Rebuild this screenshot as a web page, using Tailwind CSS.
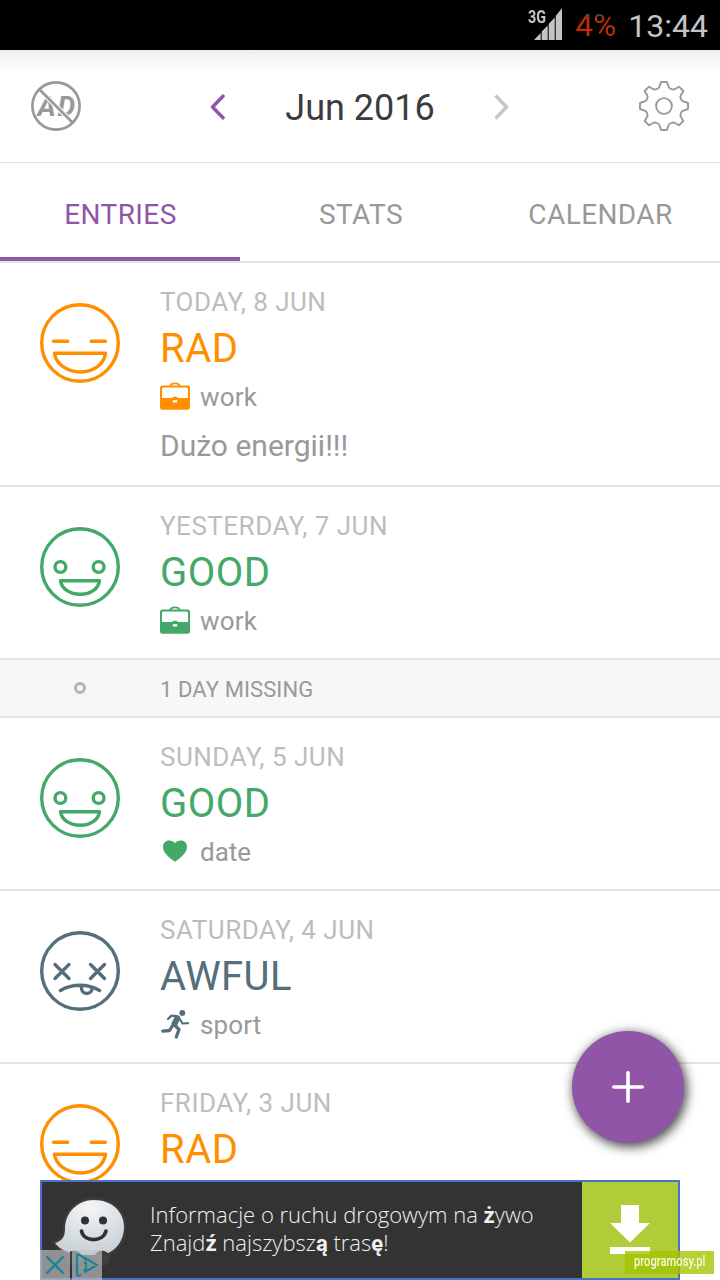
<!DOCTYPE html>
<html lang="en">
<head>
  <meta charset="UTF-8" />
  <meta name="viewport" content="width=device-width, initial-scale=1.0"/>
  <title>Jun 2016 - Entries</title>
  <script src="https://cdn.jsdelivr.net/npm/@tailwindcss/browser@4"></script>
</head>
<body class="bg-white font-['Roboto',sans-serif]">
  <!-- Shared icons -->
  <svg class="hidden">
    <symbol id="face-rad" viewBox="0 0 80 80">
      <g fill="none" stroke="currentColor" stroke-width="3.4" stroke-linecap="round" stroke-linejoin="round">
        <circle cx="40" cy="40" r="38.3"/>
        <path d="M13.5 38.3H27.8M51.2 38.3H65.5M14.5 50.3H65.5C64 61 54 69 40.5 69S16 61 14.5 50.3Z"/>
      </g>
    </symbol>
    <symbol id="face-good" viewBox="0 0 80 80">
      <g fill="none" stroke="currentColor" stroke-width="3.4" stroke-linejoin="round">
        <circle cx="40" cy="40" r="38.3"/>
        <circle cx="20.4" cy="40" r="5.4"/>
        <circle cx="58.6" cy="40" r="5.4"/>
        <path d="M20.5 53.7H59.5C58.5 61.5 51 67.3 40.3 67.3S21.5 61.5 20.5 53.7Z"/>
      </g>
    </symbol>
    <symbol id="face-awful" viewBox="0 0 80 80">
      <g fill="none" stroke="currentColor" stroke-width="3.4" stroke-linecap="round">
        <circle cx="40" cy="40" r="38.3"/>
        <path d="M15 33.5L29 47.5M29 33.5L15 47.5M50.5 33.5L64.5 47.5M64.5 33.5L50.5 47.5M20.5 59.5C32 52.5 48 52.5 59.5 59.5M41.5 56C41 60 43.5 62.5 46.8 62.5S52 60 52 57.5"/>
      </g>
    </symbol>
    <symbol id="icon-work" viewBox="0 0 30 30">
      <path fill="none" stroke="currentColor" stroke-width="1.8" d="M10 4.5C10.5 2 12.5 1.3 15 1.3S19.5 2 20 4.5"/>
      <path fill="currentColor" fill-rule="evenodd" d="M2.5 3.5H27.5A2.5 2.5 0 0 1 30 6V25.2A2.5 2.5 0 0 1 27.5 27.7H2.5A2.5 2.5 0 0 1 0 25.2V6A2.5 2.5 0 0 1 2.5 3.5ZM3.5 5.5A1.5 1.5 0 0 0 2 7V16H12.5V15.7Q12.5 14.8 13.5 14.8H16.5Q17.5 14.8 17.5 15.7V16H28V7A1.5 1.5 0 0 0 26.5 5.5ZM12.7 18.2V19.5Q12.7 20.5 13.7 20.5H16.3Q17.3 20.5 17.3 19.5V18.2Z"/>
    </symbol>
    <symbol id="icon-date" viewBox="0 0 30 30">
      <path fill="currentColor" d="M15 24.8C11 22 3 16.5 3 10C3 6 5.8 3.5 9 3.5C11.5 3.5 13.8 4.5 15 6.3C16.2 4.5 18.5 3.5 21 3.5C24.2 3.5 27 6 27 10C27 16.5 19 22 15 24.8Z"/>
    </symbol>
    <symbol id="icon-sport" viewBox="0 0 30 30">
      <circle cx="22.3" cy="2.9" r="2.9" fill="currentColor"/>
      <g fill="none" stroke="currentColor" stroke-linejoin="round" stroke-linecap="round">
        <path stroke-width="2.2" d="M8 9L11.5 5.6L16.5 6M20 9.5L22.5 13.5L28 13.2"/>
        <path stroke-width="6" d="M17.2 8.3L14.6 13.6"/>
        <path stroke-width="3.3" d="M14.5 15L19 19.5L16.3 27M12.3 16L9.5 20.5L2.8 21.2"/>
      </g>
    </symbol>
  </svg>

  <div class="relative w-[720px] h-[1280px] overflow-hidden">
    <!-- Status bar -->
    <div class="h-[50px] bg-black flex items-center justify-end pr-3">
      <span class="text-[18px] leading-4 font-bold text-[#c4c4c4] -mt-[17px] inline-block w-[19px] origin-left scale-x-[0.8]">3G</span>
      <svg class="w-7 h-8 -ml-[13px] mr-[14px] -mt-0.5" viewBox="0 0 28 32" fill="#c4c4c4">
        <path d="M0 32L6.7 25V32ZM7.7 32V23.5L13.7 17.5V32ZM14.7 32V16L20.7 9.5V32ZM21.7 32V8L28 0V32Z"/>
      </svg>
      <span class="text-[31.5px] leading-[50px] mt-0.5 text-transparent bg-clip-text bg-linear-to-b from-[#4a4a4a] from-32% to-[#c42c02] to-32% mr-3">4%</span>
      <span class="text-[32px] leading-[50px] mt-0.5 text-[#c4c4c4]">13:44</span>
    </div>

    <!-- Header -->
    <div class="h-[113px] border-b border-[#e0e0e0] bg-linear-to-b from-[#efefef] to-white to-[24px] flex items-center justify-between px-[31px]">
      <svg class="w-[50px] h-[50px]" viewBox="0 0 50 50">
        <g font-size="28" font-weight="700" font-style="italic" fill="#999">
          <text x="6.5" y="35">A</text>
          <text x="26.5" y="34.5">D</text>
        </g>
        <path d="M9 9L41 41" stroke="#fff" stroke-width="5"/>
        <g fill="none" stroke="#999" stroke-width="2.7">
          <circle cx="25" cy="25" r="23.6"/>
          <path d="M8.3 8.3L41.7 41.7"/>
        </g>
      </svg>
      <div class="flex items-center">
        <svg class="w-4 h-[26px] mt-px" viewBox="0 0 16 26" fill="none" stroke="#9055a6" stroke-width="3.5" stroke-linecap="round" stroke-linejoin="round"><path d="M13 2.2L2.5 13L13 23.8"/></svg>
        <h1 class="w-[268px] mt-[3px] text-center text-[36px] leading-[50px] text-[#3c3c3c]">Jun 2016</h1>
        <svg class="w-4 h-[26px] mt-px" viewBox="0 0 16 26" fill="none" stroke="#c6c6c6" stroke-width="3.5"><path d="M1.5 1.5L12.5 13L1.5 24.5"/></svg>
      </div>
      <svg class="w-[50px] h-[50px]" viewBox="-25 -25 50 50" fill="none" stroke="#999" stroke-width="1.9" stroke-linejoin="round">
        <path id="cog" d="M-3-24H3L4.8-18.8Q5.5-17.3 7.5-16.8Q9.5-16 11-17L15-19.3L19.3-15L17-11Q16-9.5 16.8-7.5Q17.3-5.5 18.8-4.8L24-3V0"/>
        <use href="#cog" transform="rotate(90)"/>
        <use href="#cog" transform="rotate(180)"/>
        <use href="#cog" transform="rotate(270)"/>
        <circle r="7.9"/>
      </svg>
    </div>

    <!-- Tabs -->
    <div class="h-[100px] border-b-2 border-[#e4e4e4] grid grid-cols-3 text-center text-[28px] tracking-[0.4px] leading-[104px] text-[#999]">
      <div class="h-[98px] border-b-4 border-[#9055a6] text-[#9055a6] pl-px">ENTRIES</div>
      <div class="pl-0.5">STATS</div>
      <div class="pl-px">CALENDAR</div>
    </div>

    <!-- Entries -->
    <div class="flex border-b-2 border-[#e4e4e4] pt-[23px] pb-[18px] pl-10 text-[#ff8f00]">
      <svg class="w-20 h-20 mt-[17px] mr-10"><use href="#face-rad"/></svg>
      <div>
        <p class="text-[26px] leading-8 tracking-[0.45px] text-[#bdbdbd]">TODAY, 8 JUN</p>
        <p class="h-[60px] text-[40px] leading-[62px] tracking-[0.5px]">RAD</p>
        <div class="flex items-center gap-2.5 h-[38px]">
          <svg class="w-[30px] h-[30px]"><use href="#icon-work"/></svg>
          <span class="text-[26px] tracking-[0.2px] text-[#999]">work</span>
        </div>
        <p class="h-[51px] text-[30px] leading-[60px] text-[#999]">Dużo energii!!!</p>
      </div>
    </div>

    <div class="flex border-b-2 border-[#e4e4e4] pt-[23px] pb-[18px] pl-10 text-[#43a868]">
      <svg class="w-20 h-20 mt-[17px] mr-10"><use href="#face-good"/></svg>
      <div>
        <p class="text-[26px] leading-8 tracking-[0.5px] text-[#bdbdbd]">YESTERDAY, 7 JUN</p>
        <p class="h-[60px] text-[40px] leading-[62px] tracking-[0.5px]">GOOD</p>
        <div class="flex items-center gap-2.5 h-[38px]">
          <svg class="w-[30px] h-[30px]"><use href="#icon-work"/></svg>
          <span class="text-[26px] tracking-[0.2px] text-[#999]">work</span>
        </div>
      </div>
    </div>

    <div class="h-[58px] flex items-center border-b-2 border-[#e4e4e4] bg-[#f7f7f7] pl-[74px]">
      <div class="w-3 h-3 rounded-full border-3 border-[#b5b5b5]"></div>
      <span class="ml-[74px] mt-0.5 text-[22px] tracking-[0.1px] text-[#999]">1 DAY MISSING</span>
    </div>

    <div class="flex border-b-2 border-[#e4e4e4] pt-[23px] pb-[18px] pl-10 text-[#43a868]">
      <svg class="w-20 h-20 mt-[17px] mr-10"><use href="#face-good"/></svg>
      <div>
        <p class="text-[26px] leading-8 tracking-[0.5px] text-[#bdbdbd]">SUNDAY, 5 JUN</p>
        <p class="h-[60px] text-[40px] leading-[62px] tracking-[0.5px]">GOOD</p>
        <div class="flex items-center gap-2.5 h-[38px]">
          <svg class="w-[30px] h-[30px]"><use href="#icon-date"/></svg>
          <span class="text-[26px] text-[#999]">date</span>
        </div>
      </div>
    </div>

    <div class="flex border-b-2 border-[#e4e4e4] pt-[23px] pb-[18px] pl-10 text-[#546e7b]">
      <svg class="w-20 h-20 mt-[17px] mr-10"><use href="#face-awful"/></svg>
      <div>
        <p class="text-[26px] leading-8 tracking-[0.5px] text-[#bdbdbd]">SATURDAY, 4 JUN</p>
        <p class="h-[60px] text-[40px] leading-[62px] tracking-[0.4px]">AWFUL</p>
        <div class="flex items-center gap-2.5 h-[38px]">
          <svg class="w-[30px] h-[30px]"><use href="#icon-sport"/></svg>
          <span class="text-[26px] tracking-[0.1px] text-[#999]">sport</span>
        </div>
      </div>
    </div>

    <div class="flex pt-[23px] pl-10 text-[#ff8f00]">
      <svg class="w-20 h-20 mt-[17px] mr-10"><use href="#face-rad"/></svg>
      <div>
        <p class="text-[26px] leading-8 tracking-[0.5px] text-[#bdbdbd]">FRIDAY, 3 JUN</p>
        <p class="h-[60px] text-[40px] leading-[62px] tracking-[0.5px]">RAD</p>
      </div>
    </div>

    <!-- Add button -->
    <button class="absolute right-9 bottom-[137px] w-28 h-28 rounded-full bg-[#9055a6] shadow-[2px_3px_11px_1px_rgba(0,0,0,0.7)] flex items-center justify-center">
      <svg class="w-8 h-8" viewBox="0 0 32 32" stroke="#fff" stroke-width="3.6" stroke-linecap="round"><path d="M16 1.8V30.2M1.8 16H30.2"/></svg>
    </button>

    <!-- Ad banner -->
    <div class="absolute left-10 bottom-0 w-[640px] h-[100px] border-2 border-[#4a72c8] bg-[#333] flex">
      <svg class="w-[108px] h-24" viewBox="42 1182 108 96">
        <defs>
          <radialGradient id="bubble" cx="0.5" cy="0.15" r="0.9">
            <stop offset="0" stop-color="#f4f5f6"/>
            <stop offset="1" stop-color="#c3ced4"/>
          </radialGradient>
        </defs>
        <path d="M94 1200C77 1200 65 1213 65 1229C65 1237 62 1241 55 1243C60 1250 70 1254 79 1255H103C115 1252 124 1241 124 1227C124 1211 111 1200 94 1200Z" fill="#333" stroke="#3c3c3c" stroke-width="5"/>
        <circle cx="74" cy="1258" r="8" fill="#3f3f3f"/>
        <circle cx="102" cy="1258" r="8" fill="#3f3f3f"/>
        <path d="M94 1200C77 1200 65 1213 65 1229C65 1237 62 1241 55 1243C60 1250 70 1254 79 1255H103C115 1252 124 1241 124 1227C124 1211 111 1200 94 1200Z" fill="url(#bubble)"/>
        <circle cx="85" cy="1220.5" r="4" fill="#333"/>
        <circle cx="103" cy="1220.5" r="4" fill="#333"/>
        <path d="M81.5 1231C84 1242.5 103 1242.5 106 1231" fill="none" stroke="#333" stroke-width="3.6" stroke-linecap="round"/>
        <path d="M67 1255A8 8 0 0 1 81 1255ZM95 1255A8 8 0 0 1 109 1255Z" fill="#3a3a3a"/>
      </svg>
      <p class="w-[432px] pt-[18px] whitespace-nowrap font-['Open_Sans'] font-light text-[22px] leading-7 text-[#f0f0f0]">Informacje o ruchu drogowym na <b class="font-['Roboto'] font-bold leading-none">ż</b>ywo<br>Znajd<b class="font-['Roboto'] font-bold leading-none">ź</b> najszybsz<b class="font-['Roboto'] font-bold leading-none">ą</b> tras<b class="font-['Roboto'] font-bold leading-none">ę</b>!</p>
      <div class="w-24 bg-[#b1cc39] flex justify-center">
        <svg class="w-10 h-[49px] mt-[23px]" viewBox="0 0 40 49" fill="#fff"><path d="M11 0H29V18H40L20 37.5L0 18H11ZM0 42H40V49H0Z"/></svg>
      </div>
    </div>
    <!-- Ad choices -->
    <div class="absolute left-10 bottom-0 flex gap-0.5">
      <div class="w-[30px] h-[30px] bg-[#c4c4c4]/65 flex items-center justify-center">
        <svg class="w-5 h-5" viewBox="0 0 20 20" fill="none" stroke="#16879b" stroke-width="2.4"><path d="M1.5 1.5L18.5 18.5M18.5 1.5L1.5 18.5"/></svg>
      </div>
      <div class="w-[30px] h-[30px] bg-[#c4c4c4]/65 flex items-center justify-center">
        <svg class="w-6 h-6" viewBox="0 0 24 24" fill="none" stroke="#16879b" stroke-width="2.2"><path d="M6 21L4.5 22.5Q2 23.5 2 21V3Q2 .5 4.5 2L22 12L9 19.5M9 10H11V17M8.5 17H13.5"/><circle cx="10.5" cy="7" r="1.3" fill="#16879b" stroke="none"/></svg>
      </div>
    </div>
    <!-- Watermark -->
    <div class="absolute right-1.5 bottom-1.5 w-[89px] h-[23px] bg-[#a5c400]/80 flex justify-center">
      <span class="text-[14px] leading-[21px] font-medium text-[#f4f8e0] scale-x-[0.8]">programosy.pl</span>
    </div>
  </div>
</body>
</html>
